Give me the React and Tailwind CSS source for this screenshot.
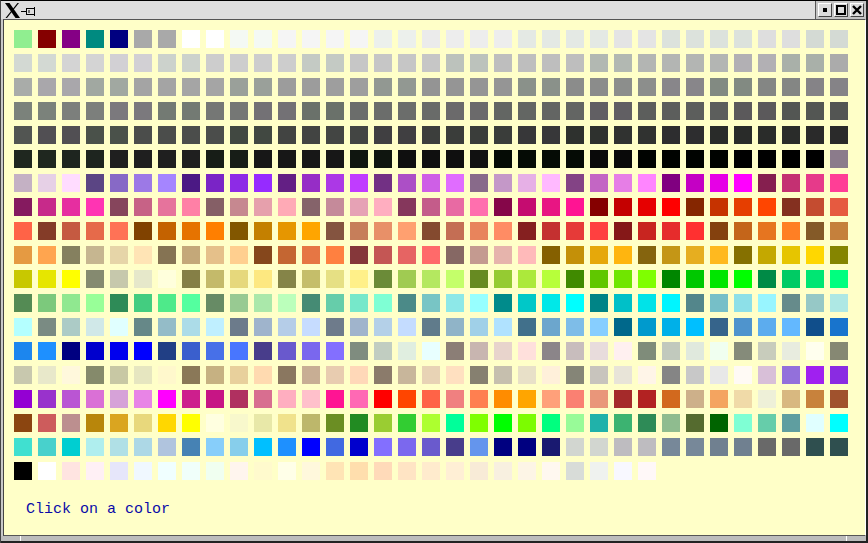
const rows = [
"90ee90 850000 850085 008a80 000080 a9a9a9 a9a9a9 ffffff ffffff f4f9f4 f4f9f4 f5f5f5 f5f5f5 f5f5f5 f5f5f5 ecf0ec ecf0ec ebebeb ededed ededed ededed e4e9e4 e4e9e4 e4e9e4 e4e9e4 e4e4e4 e4e4e4 dce2dc dce2dc dce2dc dce2dc dedede dedede d4dad4 d4dad4",
"d3d9d3 d3d9d3 d4d4d4 d4d4d4 d2d0d4 d2d0d4 ccd2cc ccd2cc cdcdcd cdcdcd cdcdcd cdcdcd c4cac4 c4cac4 c6c6c6 c6c6c6 c6c6c6 c6c6c6 bcc2bc bcc2bc bebebe bebebe bebebe bebebe b2b8b2 b2b8b2 b3b5b3 b3b5b3 b3b5b3 b3b5b3 b2b0b4 b2b0b4 a9b0a9 a9b0a9 ababab",
"a9aca9 a9a7ab a9a7ab a1a8a1 a1a8a1 a4a4a4 a4a4a4 a5a5a5 a5a5a5 9aa09a 9aa09a 9c9c9c 9c9c9c 9e9e9e 9e9e9e 929892 929892 949494 959595 959595 959595 8a918a 8a918a 8b8c8b 8b8c8b 8c8e8c 8c8e8c 88868a 88868a 828a82 828a82 848684 848684 858387 858387",
"7b827b 7b827b 7c7f7c 7c7f7c 7b797d 7b797d 737a73 737a73 757775 757775 737175 737175 6a716a 6a716a 6b6d6b 6b6d6b 6b6d6b 696b69 6b6a6b 6b6a6b 636663 636663 636563 636563 615f63 615f63 5c5e5c 5c5e5c 5c5e5c 5c5e5c 5b595b 5b595b 535653 535653 535553",
"525552 514f53 514f53 4a514a 4a514a 4b4d4b 4b4d4b 4b4d4b 4b4d4b 414841 414841 424442 424442 434543 434543 403f41 403f41 3c3e3c 3a3d3a 3a3d3a 3a3d3a 373739 373739 2e312e 2e312e 303230 303230 2d2d2f 2d2d2f 292b29 292b29 2a2c2a 2a2c2a 2a2a2a 2a2a2a",
"1f271f 1f271f 1e251f 1e251f 1f1f1f 1f1f1f 1f1f1f 1f1f1f 171d17 171d17 171717 171717 171717 171717 0f150f 0f150f 0f0f0f 0f0f0f 0f0f0f 111111 050b05 050b05 050b05 050b05 090909 090909 000300 000300 000300 000300 000000 000000 000000 000000 8b7b8b",
"c4b1c4 e6d0e6 ffdcff 5b4584 8769c6 9c79e6 a585ff 4b1984 7a24c6 8d2be6 962bff 631f84 962dc6 ac38e6 c03cff 723084 ac4fc6 ce5fe6 e06cff 886a8a c498c8 e6b0e6 ffb9ff 834385 c366c4 e67ee6 ff85ff 800080 c400c4 e600e6 ff00ff 851f4f c43072 e63a8a ff3e96",
"851a5f c72a8a e62ea0 ff34b3 86455c c76286 e6739c ff80a6 855f66 c68890 e6a0ac ffaab6 85636a c58a9a e6a2b5 ffaec0 85375c c45c8a e86aa3 ff6fae 850649 c50c70 e81583 ff1493 850000 c40000 e60000 ff0000 852600 c63300 e63e00 ff4500 843020 c44c30 e65a40",
"ff6347 843c28 c55a41 e66a4a ff7256 804200 c46200 e67300 ff7f00 825700 c48000 e69600 ffa500 845440 c67e5a e89068 ffa070 844a2f c46e54 e8845c ff8c64 852020 c43030 e63a38 ff4040 851818 c82520 e62c2c ff3030 84410e c4651a e67520 ff7f24 845a28 c5803c",
"e59a42 ffa54f 85805f c6b690 e6d5a8 ffe4b5 857353 c4a879 e5c08a ffcf8f 85471c c46632 e67644 ff8040 85373a c45654 e66463 ff6a6a 866864 c49a90 e6b4ac ffbaba 856000 c49008 e6a80a ffb50f 85640e c49616 e6ae20 ffb91f 857000 c4a800 e6c500 ffd700 858500",
"c8c800 e6e600 ffff00 858a70 c6c8ac e6e8ca ffffdc 857f46 c4ba6a e6d87c fde880 858448 c5be6a e6e084 fff089 6b8b38 a0cb52 b4e860 c4ff6a 678a22 95cb32 ace93b b7ff3a 408a00 60c700 70e600 7fff00 008600 00c800 00e600 00ff00 008a46 00cb64 00e673 00ff7f",
"548b54 7cc97c 90e890 98ff98 2e8b57 43cd80 4eea8a 54ff9f 678b65 98ca92 aae8aa bbffbb 458b74 66cdaa 76e8ca 7fffd4 4b8a88 78c5c5 8de8e8 97ffff 008b8b 00c8c8 00e8e8 00ffff 008486 00c0c8 00e3e8 00f5ff 53868b 76bfc8 8de0e8 98f5ff 668b8b 96c8c6 aee8e4",
"b4ffff 7a8b83 accbc6 d0e8e8 e0ffff 668888 94bcc8 acdce8 bfefff 6c7b8b 9fb4cc b5cde8 c6dcff 6e7b8b a0b4cc b4d0e8 c4dcff 607b8b 90b4c8 a0d0e8 b0e2ff 41708b 6ca6cd 7ebde8 87ceff 00688b 009acd 00b0e8 00bfff 36648b 4f94cd 5cacee 63b8ff 104e8b 1874cd",
"1c86ee 1e90ff 000080 0000cd 0000ee 0000ff 213f85 3a5fcd 4770e8 4876ff 483d8b 6959cd 7a67ee 836fff 7f8c7f c1cdc1 e0eee0 e8ffff 8b7e76 c8b5b0 e8d4cc ffe0dc 8b8589 c8bdbd e8dcdc fff0f0 7f8c7a c1c9bd e0e9dd f0fff0 858b7a c8ccbc e8ecdf ffffee 868873",
"c8c8ae e8e8ca fff8dc 858a6b c8c8a4 e6e6c0 fff8cc 8a7858 c6b182 e8d09c ffdab0 8a7760 c8ae94 e8ccb0 ffd8b8 8b7b6b c8b69b e8d3b5 ffe0c0 868070 c6bfae e8e0c8 fff0da 858577 c8c4bd e8e4d8 fff5e8 858585 c8c8c8 e8e8e8 fffaf5 d8bfd8 9370db a020f0 8a2be2",
"9400d3 9932cc ba55d3 da70d6 d6a2d8 e884e6 ff00ff cd1f8d c71585 b03060 d86e90 ffaec0 ffc0cb ff1493 ff69b4 ff0000 ff4500 ff6347 f08080 ff7f50 ff8c00 ffa500 ffa07a fa8072 e9967a a52a2a b22222 d2691e cdb08a f4a460 f0daa8 eef0d8 d8b880 c8823c a0522d",
"8b4510 cd5c5c bc8f8f b8860b daa520 e8d87c ffd700 ffff00 ffffe0 f8f8cc e8e8a8 f0e28c bdb76b 6b8e23 228b22 9acd32 32cd32 adff2f 00ff9a 7fff00 00ff00 7cfc00 00ff7f 98fb98 20b2aa 3cb371 2e8b57 8fbc8f 556b2f 006400 7fffd4 66cdaa 5f9ea0 e0ffff 00ffff",
"40e0d0 48d1cc 00ced1 afeeee b0e0e6 add8e6 b0c4de 4682b4 87cefa 87ceeb 00bfff 1e90ff 0000ff 4169e1 0000cd 836fff 7b68ee 6a5acd 483d8b 6495ed 000080 000080 191970 d2d6d0 d2d6d0 bebcc0 bebcc0 778899 778899 708090 708090 696969 696969 2f4f4f 2f4f4f",
"000000 ffffff ffe4e1 fff0f5 e6e6fa f0f8ff f0ffff f0fffa f0fff0 fff5ee fffacd ffffe8 fff8dc ffe4b5 ffdead ffdab9 ffe4c4 ffebcd ffefd5 f8ebd7 f8f0e0 fdf5e6 fff8f0 d8dcd8 eff2ef f8f8ff fff8f8",
];

function Logo() {
  return (
    <svg width="36" height="18" viewBox="0 0 36 18" className="shrink-0">
      <polygon points="4,2 8.5,2 19,17 14.5,17" fill="#000" />
      <polygon points="16.5,2 18,2 6,17 4.5,17" fill="#000" />
      <path d="M20 10.5h5M25.5 7v7M25.5 7.5h8v6h-8M33.5 6v9M28 9v3" stroke="#000" strokeWidth="1" fill="none" />
    </svg>
  );
}

function TitleButton({ children }) {
  return (
    <div className="w-[14px] h-[14px] bg-[#dcdcdc] border border-t-white border-l-white border-r-[#444] border-b-[#444] flex items-center justify-center">
      <svg width="12" height="12" viewBox="0 0 12 12">{children}</svg>
    </div>
  );
}

export default function App() {
  return (
    <div className="w-[868px] h-[543px] flex flex-col bg-[#c8c8c8] border-t border-t-black border-l border-l-[#444] border-r-2 border-r-[#222] overflow-hidden">
      <div className="h-[18px] shrink-0 bg-[#dedede] flex justify-between">
        <Logo />
        <div className="flex gap-[2px] pt-[2px] pr-[2px] border-l border-[#555] pl-[2px] bg-[#c4c4c4]">
          <TitleButton><rect x="4" y="4" width="4" height="4" fill="#000" /></TitleButton>
          <TitleButton><rect x="2" y="2" width="8" height="8" fill="none" stroke="#000" strokeWidth="2" /></TitleButton>
          <TitleButton><path d="M2 2L10 10M10 2L2 10" stroke="#000" strokeWidth="2.4" /></TitleButton>
        </div>
      </div>
      <div className="flex-1 min-h-0 ml-[2px] border-l border-t border-l-[#444] border-t-[#555] border-b border-b-[#555] border-r border-r-white bg-[#ffffc8] pl-[10px] pt-[10px] flex flex-col">
        <div className="grid grid-cols-[repeat(35,18px)] gap-[6px]">
          {rows.flatMap((row, r) =>
            row.split(" ").map((c, i) => (
              <div key={r + "-" + i} className="h-[18px]" style={{ backgroundColor: "#" + c }} />
            ))
          )}
        </div>
        <div className="mt-[21px] ml-[12px] text-[15px] leading-[18px] text-[#0a0aa8] font-['Liberation_Mono',monospace]">
          Click on a color
        </div>
      </div>
      <div className="h-[7px] shrink-0 bg-[#bcbcbc] flex justify-between border-b-2 border-b-[#222]">
        <div className="w-[20px] border-r border-r-white" />
        <div className="w-[20px] border-l border-l-white" />
      </div>
    </div>
  );
}
